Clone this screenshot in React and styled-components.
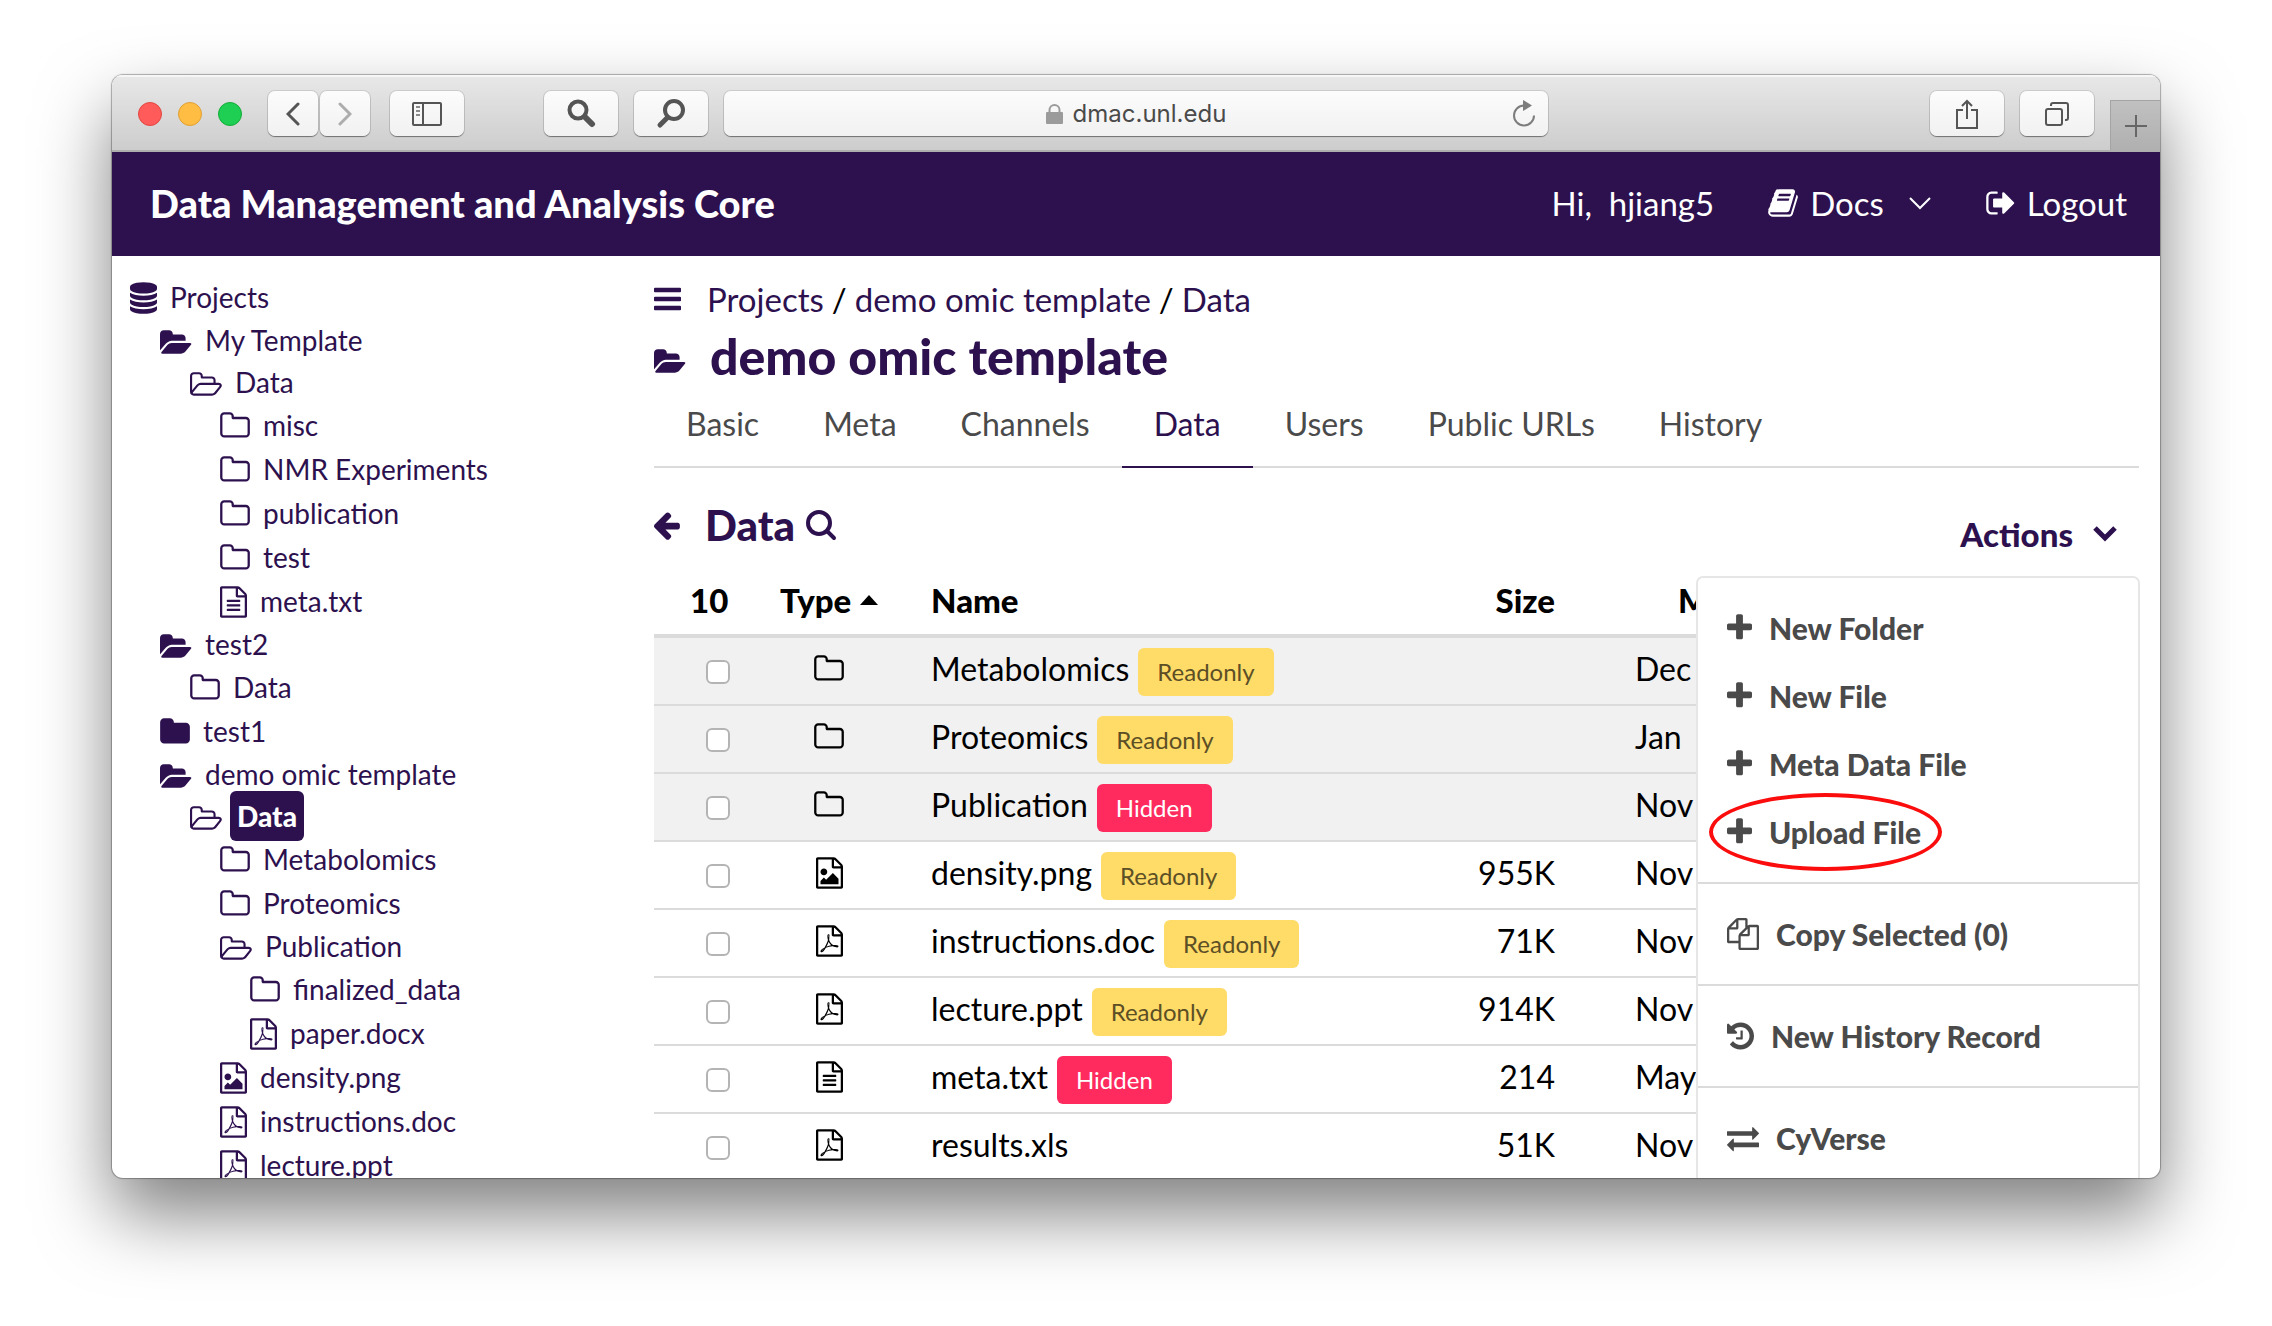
import React from "react";
import styled, { createGlobalStyle, css } from "styled-components";

const purple = "#2d114f";
const line = "#dbdbdb";
const ink = "#4a4a4a";

const GlobalStyle = createGlobalStyle`
  *, *::before, *::after { box-sizing: border-box; }
  body {
    margin: 0;
    background: #fff;
    font-family: Lato, "Liberation Sans", sans-serif;
    font-size: 32px;
    line-height: 44px;
    color: #000;
  }
  button { font: inherit; color: inherit; border: 0; background: none; padding: 0; cursor: pointer; }
  a { color: inherit; text-decoration: none; }
  ul, ol { list-style: none; margin: 0; padding: 0; }
  h1, h2 { margin: 0; }
  svg { display: block; flex: none; }
`;

/* Glyphs on a 1792-unit em square; w is the advance width, x the left edge. */
const page =
  "M1468 380q28 28 48 76t20 88v1152q0 40-28 68t-68 28h-1344q-40 0-68-28t-28-68v-1600q0-40 28-68t68-28h896q40 0 88 20t76 48zm-444-244v376h376q-10-29-22-41l-313-313q-12-12-41-22zm384 1528v-1024h-416q-40 0-68-28t-28-68v-416h-768v1536h1280z";
const disc = "v170q0 69-103 128t-280 93.5-385 34.5-385-34.5-280-93.5-103-128v-170q119 84 325 127t443 43z";
const glyphs = {
  database: {
    w: 1536,
    d: `M768 768q237 0 443-43t325-127${disc}M768 1536q237 0 443-43t325-127${disc}M768 1152q237 0 443-43t325-127${disc}M768 0q208 0 385 34.5t280 93.5 103 128v128q0 69-103 128t-280 93.5-385 34.5-385-34.5-280-93.5-103-128v-128q0-69 103-128t280-93.5 385-34.5z`,
  },
  folder: {
    w: 1664,
    d: "M1664 608v704q0 92-66 158t-158 66h-1216q-92 0-158-66t-66-158v-960q0-92 66-158t158-66h320q92 0 158 66t66 158v32h672q92 0 158 66t66 158z",
  },
  folderO: {
    w: 1664,
    d: "M1536 1312v-704q0-40-28-68t-68-28h-704q-40 0-68-28t-28-68v-64q0-40-28-68t-68-28h-320q-40 0-68 28t-28 68v960q0 40 28 68t68 28h1216q40 0 68-28t28-68zm128-704v704q0 92-66 158t-158 66h-1216q-92 0-158-66t-66-158v-960q0-92 66-158t158-66h320q92 0 158 66t66 158v32h672q92 0 158 66t66 158z",
  },
  folderOpen: {
    w: 1920,
    d: "M1879 952q0 31-31 66l-336 396q-43 51-120.5 86.5t-143.5 35.5h-1088q-34 0-60.5-13t-26.500-43q0-31 31-66l336-396q43-51 120.500-86.500t143.500-35.500h1088q34 0 60.500 13t26.500 43zm-343-344v160h-832q-94 0-197 47.500t-164 119.500l-337 396-5 6q0-4-.5-12.500t-.5-12.500v-960q0-92 66-158t158-66h320q92 0 158 66t66 158v32h544q92 0 158 66t66 158z",
  },
  folderOpenO: {
    x: 64,
    w: 1920,
    d: "M1845 931q0-35-53-35h-1088q-40 0-85.500 21.500t-71.500 52.500l-294 363q-18 24-18 40 0 35 53 35h1088q40 0 86-22t71-53l294-363q18-22 18-39zm-1141-163h768v-160q0-40-28-68t-68-28h-576q-40 0-68-28t-28-68v-64q0-40-28-68t-68-28h-320q-40 0-68 28t-28 68v853l256-315q44-53 116-87.500t140-34.500zm1269 163q0 62-46 120l-295 363q-43 53-116 87.500t-140 34.500h-1088q-92 0-158-66t-66-158v-960q0-92 66-158t158-66h320q92 0 158 66t66 158v32h544q92 0 158 66t66 158v160h192q54 0 99 24.500t67 70.500q15 32 15 68z",
  },
  text: {
    w: 1536,
    d: page + "M384 800q0-14 9-23t23-9h704q14 0 23 9t9 23v64q0 14-9 23t-23 9h-704q-14 0-23-9t-9-23zM384 1056q0-14 9-23t23-9h704q14 0 23 9t9 23v64q0 14-9 23t-23 9h-704q-14 0-23-9t-9-23zM384 1312q0-14 9-23t23-9h704q14 0 23 9t9 23v64q0 14-9 23t-23 9h-704q-14 0-23-9t-9-23z",
  },
  image: {
    w: 1536,
    d: page + "M1280 1216v320h-1024v-192l192-192 128 128 384-384zM448 1024q-80 0-136-56t-56-136 56-136 136-56 136 56 56 136-56 136-136 56z",
  },
  pdf: {
    w: 1536,
    d: page + "M894 1071q33 26 84 56 59-7 117-7 147 0 177 49 16 22 2 52 0 1-1 2l-2 2v1q-6 38-71 38-48 0-115-20t-130-53q-221 24-392 83-153 262-242 262-15 0-28-7l-24-12q-1-1-6-5-10-10-6-36 9-40 56-91.500t132-96.500q14-9 23 6 2 2 2 4 52-85 107-197 68-136 104-262-24-82-30.500-159.500t6.500-127.500q11-40 42-40h22q23 0 35 15 18 21 9 68-2 6-4 8 1 3 1 8v30q-2 123-14 192 55 164 146 238zm-576 411q52-24 137-158-51 40-87.500 84t-49.500 74zm398-920q-15 42-2 132 1-7 7-44 0-3 7-43 1-4 4-8-1-1-1-2t-1-3q-1-22-13-36 0 1-1 2zm-124 661q135-54 284-81-2-1-13-9.500t-16-13.500q-76-67-127-176-27 86-83 197-30 56-45 83zm646-16q-24-24-140-24 76 28 124 28 14 0 18-1 0-1-2-3z",
  },
  bars: {
    w: 1536,
    d: "M1536 1344v128q0 26-19 45t-45 19h-1408q-26 0-45-19t-19-45v-128q0-26 19-45t45-19h1408q26 0 45 19t19 45zM1536 832v128q0 26-19 45t-45 19h-1408q-26 0-45-19t-19-45v-128q0-26 19-45t45-19h1408q26 0 45 19t19 45zM1536 320v128q0 26-19 45t-45 19h-1408q-26 0-45-19t-19-45v-128q0-26 19-45t45-19h1408q26 0 45 19t19 45z",
  },
  plus: {
    w: 1408,
    d: "M1408 736v192q0 40-28 68t-68 28h-416v416q0 40-28 68t-68 28h-192q-40 0-68-28t-28-68v-416h-416q-40 0-68-28t-28-68v-192q0-40 28-68t68-28h416v-416q0-40 28-68t68-28h192q40 0 68 28t28 68v416h416q40 0 68 28t28 68z",
  },
  history: {
    w: 1536,
    d: "M1536 896q0 156-61 298t-164 245-245 164-298 61q-172 0-327-72.500t-264-204.500q-7-10-6.500-22.500t8.500-20.500l137-138q10-9 25-9 16 2 23 12 73 95 179 147t225 52q104 0 198.500-40.500t163.500-109.500 109.500-163.500 40.500-198.500-40.500-198.500-109.500-163.500-163.500-109.500-198.500-40.500q-98 0-188 35.500t-160 101.500l137 138q31 30 14 69-17 40-59 40h-448q-26 0-45-19t-19-45v-448q0-42 40-59 39-17 69 14l130 129q107-101 244.500-156.500t284.500-55.500q156 0 298 61t245 164 164 245 61 298zm-640-288v448q0 14-9 23t-23 9h-320q-14 0-23-9t-9-23v-64q0-14 9-23t23-9h224v-352q0-14 9-23t23-9h64q14 0 23 9t9 23z",
  },
  exchange: {
    w: 1792,
    d: "M1792 1184v192q0 13-9.500 22.500t-22.500 9.500h-1376v192q0 13-9.500 22.500t-22.500 9.500q-12 0-24-10l-319-320q-9-9-9-22 0-14 9-23l320-320q9-9 23-9 13 0 22.500 9.500t9.500 22.500v192h1376q13 0 22.500 9.500t9.500 22.500zm0-544q0 14-9 23l-320 320q-9 9-23 9-13 0-22.500-9.500t-9.500-22.500v-192h-1376q-13 0-22.500-9.500t-9.500-22.500v-192q0-13 9.500-22.500t22.500-9.500h1376v-192q0-14 9-23t23-9q12 0 24 10l319 319q9 9 9 23z",
  },
  copy: {
    w: 1792,
    d: "M1696 384q40 0 68 28t28 68v1216q0 40-28 68t-68 28h-960q-40 0-68-28t-28-68v-288h-544q-40 0-68-28t-28-68v-672q0-40 20-88t48-76l408-408q28-28 76-48t88-20h416q40 0 68 28t28 68v328q68-40 128-40h416zm-544 213l-299 299h299v-299zm-640-384l-299 299h299v-299zm196 647l316-316v-416h-384v416q0 40-28 68t-68 28h-416v640h512v-256q0-40 20-88t48-76zm956 804v-1152h-384v416q0 40-28 68t-68 28h-416v640h896z",
  },
  signOut: {
    w: 1600,
    d: "M640 1440q0 4 1 20t.5 26.500-3 23.500-10 19.500-20.500 6.500h-320q-119 0-203.500-84.500t-84.500-203.500v-704q0-119 84.500-203.500t203.500-84.500h320q13 0 22.500 9.500t9.500 22.500q0 4 1 20t.5 26.500-3 23.500-10 19.500-20.500 6.500h-320q-66 0-113 47t-47 113v704q0 66 47 113t113 47h312l11.500 1 11.500 3 8 5.500 7 9 2 13.500zm928-544q0 26-19 45l-544 544q-19 19-45 19t-45-19-19-45v-288h-448q-26 0-45-19t-19-45v-384q0-26 19-45t45-19h448v-288q0-26 19-45t45-19 45 19l544 544q19 19 19 45z",
  },
  book: {
    w: 1664,
    d: "M1639 478q40 57 18 129l-275 906q-19 64-76.500 107.500t-122.500 43.500h-923q-77 0-148.500-53.500t-99.500-131.500q-24-67-2-127 0-4 3-27t4-37q1-8-3-21.500t-3-19.500q2-11 8-21t16.500-23.500 16.500-23.500q23-38 45-91.500t30-91.500q3-10 .5-30t-.5-28q3-11 17-28t17-23q21-36 42-92t25-90q1-9-2.500-32t.5-28q4-13 22-30.500t22-22.500q19-26 42.500-84.500t27.500-96.500q1-8-3-25.500t-2-26.500q2-8 9-18t18-23 17-21q8-12 16.500-30.500t15-35 16-36 19.500-32 26.500-23.500 36-11.500 47.500 5.500l-1 3q38-9 51-9h761q74 0 114 56t18 130l-274 906q-36 119-71.500 153.500t-128.500 34.500h-869q-27 0-38 15-11 16-1 43 24 70 144 70h923q29 0 56-15.500t35-41.500l300-987q7-22 5-57 38 15 59 43zm-1064 2q-4 13 2 22.500t20 9.500h608q13 0 25.500-9.500t16.500-22.500l21-64q4-13-2-22.500t-20-9.500h-608q-13 0-25.500 9.500t-16.500 22.500zm-83 256q-4 13 2 22.500t20 9.500h608q13 0 25.500-9.500t16.500-22.500l21-64q4-13-2-22.500t-20-9.500h-608q-13 0-25.500 9.500t-16.500 22.500z",
  },
  arrowLeft: {
    w: 1536,
    d: "M1472 896v128q0 53-32.500 90.500t-84.500 37.500h-704l293 294q38 36 38 90t-38 90l-75 76q-37 37-90 37-52 0-91-37l-651-652q-37-37-37-90 0-52 37-91l651-650q38-38 91-38 52 0 90 38l75 74q38 38 38 91t-38 91l-293 293h704q52 0 84.500 37.500t32.500 90.500z",
  },
};

function Icon({ name, size = 32 }) {
  const { x = 0, w, d } = glyphs[name];
  return (
    <svg width={Math.round((w * size) / 1792)} height={size} viewBox={`${x} 0 ${w} 1792`} fill="currentColor" aria-hidden="true">
      <path d={d} />
    </svg>
  );
}

const Desktop = styled.div`
  height: 100vh;
  padding: 75px 112px 148px;
  overflow: hidden;
`;

const Window = styled.div`
  display: flex;
  flex-direction: column;
  height: 100%;
  border-radius: 11px;
  overflow: hidden;
  background: #fff;
  box-shadow: 0 0 1px 1px rgba(0, 0, 0, 0.3), 0 36px 72px rgba(0, 0, 0, 0.5);
`;

const Toolbar = styled.div`
  display: flex;
  align-items: center;
  flex: none;
  height: 77px;
  padding: 2px 0 0 26px;
  background: linear-gradient(#e8e8e8, #cdcdcd);
  border-bottom: 2px solid #aeaeae;
  box-shadow: inset 0 2px 0 #f6f6f6;
`;

const Lights = styled.div`
  display: flex;
  gap: 16px;
  margin-right: 26px;
`;

const Light = styled.button`
  width: 24px;
  height: 24px;
  border-radius: 50%;
  background: ${(p) => p.$fill};
  border: 1px solid ${(p) => p.$edge};
`;

const toolSurface = css`
  height: 45px;
  border-radius: 7px;
  background: linear-gradient(#fcfcfc, #f1f1f1);
  box-shadow: 0 0 0 1px rgba(0, 0, 0, 0.1), 0 1px 1px rgba(0, 0, 0, 0.4);
`;

const ToolGroup = styled.div`
  display: flex;
  gap: ${(p) => p.$gap}px;
  margin-right: ${(p) => p.$after}px;
`;

const ToolButton = styled.button`
  ${toolSurface}
  display: grid;
  place-items: center;
  width: ${(p) => (p.$narrow ? 50 : 74)}px;
  color: ${(p) => (p.disabled ? "#adadad" : "#555")};
`;

const AddressBar = styled.div`
  ${toolSurface}
  flex: 1;
  display: flex;
  align-items: center;
  margin-right: 382px;
  padding: 0 12px 0 36px;
  color: #4a4a4a;
  font-family: Inter, "Liberation Sans", sans-serif;
  font-size: 24px;
`;

const Address = styled.div`
  flex: 1;
  display: flex;
  align-items: center;
  justify-content: center;
  gap: 10px;
`;

const NewTab = styled.button`
  align-self: flex-end;
  display: grid;
  place-items: center;
  width: 50px;
  height: 50px;
  background: linear-gradient(#c0c0c0, #b0b0b0);
  border-left: 1px solid #a4a4a4;
  border-top: 1px solid #a4a4a4;
  color: #666;
`;

const SiteHeader = styled.header`
  display: flex;
  align-items: center;
  justify-content: space-between;
  flex: none;
  height: 104px;
  padding: 0 33px 2px 38px;
  background: ${purple};
  color: #fff;
`;

const Brand = styled.a`
  font-size: 38px;
  font-weight: 900;
`;

const HeaderNav = styled.nav`
  display: flex;
  align-items: center;
  gap: 54px;
  font-size: 33px;
`;

const HeaderItem = styled.a`
  display: flex;
  align-items: center;
  gap: 12px;
`;

const Caret = styled.svg`
  margin-left: 12px;
`;

const Columns = styled.div`
  display: flex;
  flex: 1;
  min-height: 0;
`;

const Sidebar = styled.aside`
  flex: none;
  width: 542px;
  padding: 19px 0 0 18px;
  overflow: hidden;
  color: ${purple};
  font-size: 28px;
`;

const TreeRow = styled.li`
  display: flex;
  align-items: flex-start;
  padding-left: ${(p) => p.$level * 30}px;
  line-height: ${(p) => (p.$open ? 42 : 44)}px;
  svg { margin: ${(p) => (p.$open ? 9 : 7)}px 0 0; }
`;

const TreeLink = styled.a`
  margin-left: 13px;
  ${(p) =>
    p.$selected &&
    css`
      margin: -4px 0 -4px 8px;
      padding: 0 7px;
      border-radius: 6px;
      line-height: 50px;
      background: ${purple};
      color: #fff;
      font-weight: 900;
    `}
`;

const Main = styled.main`
  flex: 1;
  min-width: 0;
  padding: 21px 21px 0 0;
`;

const Crumbs = styled.nav`
  display: flex;
  align-items: center;
  color: ${purple};
  font-size: 33px;
  ol { display: flex; margin-left: 26px; }
  li + li::before { content: "/"; margin: 0 8px; color: #000; }
`;

const Title = styled.h1`
  display: flex;
  align-items: center;
  gap: 24px;
  margin-top: 5px;
  font-size: 50px;
  font-weight: 900;
  line-height: 60px;
  color: ${purple};
  svg { margin-top: 12px; }
`;

const Tabs = styled.nav`
  display: flex;
  margin-top: 16px;
  border-bottom: 2px solid ${line};
`;

const Tab = styled.a`
  margin-bottom: -2px;
  padding: 0 32px 20px;
  border-bottom: 2px solid ${(p) => (p.$active ? purple : "transparent")};
  color: ${(p) => (p.$active ? purple : ink)};
`;

const ListHead = styled.div`
  display: flex;
  align-items: center;
  justify-content: space-between;
  height: 68px;
  margin-top: 30px;
  color: ${purple};
`;

const FolderTitle = styled.div`
  display: flex;
  align-items: center;
  align-self: flex-start;
  h2 { margin: 0 10px 0 24px; font-size: 42px; font-weight: 900; line-height: 54px; }
`;

const Dropdown = styled.div`
  position: relative;
  padding: 4px 22px 0 0;
`;

const ActionsButton = styled.button`
  display: flex;
  align-items: center;
  gap: 20px;
  font-weight: 900;
  font-size: 33px;
`;

const Menu = styled.ul`
  position: absolute;
  z-index: 2;
  top: 68px;
  right: -1px;
  width: 444px;
  padding: 16px 0;
  border: 2px solid #e6e6e6;
  border-radius: 7px;
  background: #fff;
  color: ${ink};
  font-size: 30px;
  font-weight: 900;
`;

const MenuItem = styled.li`
  position: relative;
  ${(p) =>
    p.$divided &&
    css`
      margin-top: 16px;
      padding-top: 16px;
      border-top: 2px solid ${line};
    `}
  button {
    display: flex;
    align-items: center;
    gap: 17px;
    width: 100%;
    height: 68px;
    padding-left: 29px;
  }
`;

const Ring = styled.span`
  position: absolute;
  top: -5px;
  left: 11px;
  width: 233px;
  height: 78px;
  border: 4px solid #fb0d0d;
  border-radius: 50%;
  pointer-events: none;
`;

const Table = styled.table`
  width: 100%;
  table-layout: fixed;
  border-collapse: separate;
  border-spacing: 0;
`;

const Th = styled.th`
  width: ${(p) => (p.$w ? p.$w + "px" : "auto")};
  height: 72px;
  padding: 0 25px 0 ${(p) => p.$left || 25}px;
  border-bottom: 4px solid ${line};
  text-align: ${(p) => p.$align || "left"};
  font-weight: 900;
  font-size: 33px;
  white-space: nowrap;
`;

const Td = styled.td`
  height: 68px;
  padding: 0 25px 4px ${(p) => p.$left || 25}px;
  border-bottom: 2px solid ${line};
  text-align: ${(p) => p.$align || "left"};
  white-space: nowrap;
`;

const Row = styled.tr`
  background: ${(p) => (p.$folder ? "#f1f1f1" : "#fff")};
`;

const Check = styled.input`
  appearance: none;
  display: block;
  width: 24px;
  height: 24px;
  margin: 6px 0 0;
  border: 2px solid #b4b4b4;
  border-radius: 6px;
  background: #fff;
`;

const SortButton = styled.button`
  display: flex;
  align-items: center;
  gap: 9px;
  font-weight: 900;
`;

const TypeCell = styled.div`
  display: flex;
  justify-content: center;
`;

const NameCell = styled.div`
  display: flex;
  align-items: center;
  gap: 9px;
`;

const Tag = styled.span`
  margin: 3px 0 -3px;
  padding: 0 19px;
  border-radius: 6px;
  font-size: 24px;
  line-height: 48px;
  background: ${(p) => (p.$kind === "Hidden" ? "#ff2b5e" : "#ffdb68")};
  color: ${(p) => (p.$kind === "Hidden" ? "#fff" : "#5c4f26")};
`;

const tree = [
  [0, "database", "Projects"],
  [1, "folderOpen", "My Template"],
  [2, "folderOpenO", "Data"],
  [3, "folderO", "misc"],
  [3, "folderO", "NMR Experiments"],
  [3, "folderO", "publication"],
  [3, "folderO", "test"],
  [3, "text", "meta.txt"],
  [1, "folderOpen", "test2"],
  [2, "folderO", "Data"],
  [1, "folder", "test1"],
  [1, "folderOpen", "demo omic template"],
  [2, "folderOpenO", "Data", true],
  [3, "folderO", "Metabolomics"],
  [3, "folderO", "Proteomics"],
  [3, "folderOpenO", "Publication"],
  [4, "folderO", "finalized_data"],
  [4, "pdf", "paper.docx"],
  [3, "image", "density.png"],
  [3, "pdf", "instructions.doc"],
  [3, "pdf", "lecture.ppt"],
];

const files = [
  ["folderO", "Metabolomics", "Readonly", "", "Dec"],
  ["folderO", "Proteomics", "Readonly", "", "Jan"],
  ["folderO", "Publication", "Hidden", "", "Nov"],
  ["image", "density.png", "Readonly", "955K", "Nov"],
  ["pdf", "instructions.doc", "Readonly", "71K", "Nov"],
  ["pdf", "lecture.ppt", "Readonly", "914K", "Nov"],
  ["text", "meta.txt", "Hidden", "214", "May"],
  ["pdf", "results.xls", "", "51K", "Nov"],
];

const actions = [
  { icon: "plus", label: "New Folder" },
  { icon: "plus", label: "New File" },
  { icon: "plus", label: "Meta Data File" },
  { icon: "plus", label: "Upload File", ringed: true },
  { icon: "copy", label: "Copy Selected (0)", divided: true },
  { icon: "history", label: "New History Record", divided: true },
  { icon: "exchange", label: "CyVerse", divided: true },
];

const tabs = ["Basic", "Meta", "Channels", "Data", "Users", "Public URLs", "History"];

function BrowserToolbar() {
  return (
    <Toolbar>
      <Lights>
        <Light $fill="#ff5b5a" $edge="#e2463f" aria-label="Close" />
        <Light $fill="#ffbd44" $edge="#e0a033" aria-label="Minimize" />
        <Light $fill="#1ecf53" $edge="#14ab38" aria-label="Zoom" />
      </Lights>
      <ToolGroup $gap={2} $after={20}>
        <ToolButton $narrow aria-label="Back">
          <svg width="14" height="24" viewBox="0 0 14 24" fill="none" stroke="currentColor" strokeWidth="3" strokeLinecap="round"><path d="M12 2 2 12l10 10" /></svg>
        </ToolButton>
        <ToolButton $narrow disabled aria-label="Forward">
          <svg width="14" height="24" viewBox="0 0 14 24" fill="none" stroke="currentColor" strokeWidth="3" strokeLinecap="round"><path d="m2 2 10 10L2 22" /></svg>
        </ToolButton>
      </ToolGroup>
      <ToolGroup $gap={0} $after={80}>
        <ToolButton aria-label="Sidebar">
          <svg width="30" height="24" viewBox="0 0 30 24" fill="none" stroke="currentColor" strokeWidth="2"><rect x="1" y="1" width="28" height="22" rx="1" /><path d="M11 1v22" /><path d="M4 5h4M4 9h4M4 13h4" stroke="#8a8a8a" /></svg>
        </ToolButton>
      </ToolGroup>
      <ToolGroup $gap={16} $after={16}>
        <ToolButton aria-label="Find">
          <svg width="30" height="30" viewBox="0 0 30 30" fill="none" stroke="currentColor" strokeLinecap="round"><circle cx="12" cy="11" r="8.500" strokeWidth="4" /><path d="m19 18 7 7" strokeWidth="6" /></svg>
        </ToolButton>
        <ToolButton aria-label="Look up">
          <svg width="30" height="30" viewBox="0 0 30 30" fill="none" stroke="currentColor" strokeLinecap="round"><circle cx="18" cy="11" r="9" strokeWidth="4" /><path d="m11 19-7 7" strokeWidth="5" /></svg>
        </ToolButton>
      </ToolGroup>
      <AddressBar>
        <Address>
          <svg width="17" height="20" viewBox="0 0 17 20" fill="#9b9b9b"><rect y="8" width="17" height="12" rx="1" /><path d="M3.500 9V6a5 5 0 0 1 10 0v3" fill="none" stroke="#9b9b9b" strokeWidth="2" /></svg>
          dmac.unl.edu
        </Address>
        <svg width="24" height="28" viewBox="0 0 24 28" fill="none" stroke="#7d7d7d" strokeWidth="2"><path d="M12 5.500a10 10 0 1 0 10 10" /><path d="m11 0 9 5.500-9 5.500z" fill="#7d7d7d" stroke="none" /></svg>
      </AddressBar>
      <ToolGroup $gap={16} $after={16}>
        <ToolButton aria-label="Share">
          <svg width="24" height="30" viewBox="0 0 24 30" fill="none" stroke="currentColor" strokeWidth="2"><path d="M8 11H2v18h20V11h-6M12 20V2M7 7l5-5 5 5" /></svg>
        </ToolButton>
        <ToolButton aria-label="Tabs">
          <svg width="26" height="26" viewBox="0 0 26 26" fill="none" stroke="currentColor" strokeWidth="2"><rect x="2" y="8" width="16" height="16" rx="2" /><path d="M7 5V4q0-2 2-2h13q2 0 2 2v13q0 2-2 2h-1" /></svg>
        </ToolButton>
      </ToolGroup>
      <NewTab aria-label="New tab">
        <svg width="24" height="24" viewBox="0 0 24 24" stroke="currentColor" strokeWidth="2"><path d="M12 1v22M1 12h22" /></svg>
      </NewTab>
    </Toolbar>
  );
}

export default function App() {
  return (
    <Desktop>
      <GlobalStyle />
      <Window>
        <BrowserToolbar />
        <SiteHeader>
          <Brand href="#">Data Management and Analysis Core</Brand>
          <HeaderNav>
            <span>Hi,&nbsp; hjiang5</span>
            <HeaderItem href="#docs">
              <Icon name="book" />
              Docs
              <Caret width="24" height="14" viewBox="0 0 24 14" fill="none" stroke="#fff" strokeWidth="2"><path d="m2 2 10 10L22 2" /></Caret>
            </HeaderItem>
            <HeaderItem href="#logout">
              <Icon name="signOut" />
              Logout
            </HeaderItem>
          </HeaderNav>
        </SiteHeader>
        <Columns>
          <Sidebar>
            <ul>
              {tree.map(([level, icon, label, selected], i) => {
                const open = icon.startsWith("folderOpen");
                return (
                  <TreeRow key={i} $level={level} $open={open}>
                    <Icon name={icon} size={open ? 30 : 32} />
                    <TreeLink href="#tree" $selected={selected}>{label}</TreeLink>
                  </TreeRow>
                );
              })}
            </ul>
          </Sidebar>
          <Main>
            <Crumbs aria-label="Breadcrumb">
              <Icon name="bars" />
              <ol>
                <li><a href="#projects">Projects</a></li>
                <li><a href="#template">demo omic template</a></li>
                <li><a href="#data">Data</a></li>
              </ol>
            </Crumbs>
            <Title>
              <Icon name="folderOpen" size={30} />
              demo omic template
            </Title>
            <Tabs>
              {tabs.map((t) => (
                <Tab key={t} href="#tab" $active={t === "Data"}>{t}</Tab>
              ))}
            </Tabs>
            <ListHead>
              <FolderTitle>
                <button aria-label="Up one level"><Icon name="arrowLeft" /></button>
                <h2>Data</h2>
                <button aria-label="Search">
                  <svg width="32" height="32" viewBox="0 0 32 32" fill="none" stroke="currentColor" strokeWidth="4" strokeLinecap="round"><circle cx="14" cy="14" r="11" /><path d="m22 22 7 7" /></svg>
                </button>
              </FolderTitle>
              <Dropdown>
                <ActionsButton aria-haspopup="menu" aria-expanded="true">
                  Actions
                  <svg width="24" height="16" viewBox="0 0 24 16" fill="none" stroke="currentColor" strokeWidth="5"><path d="m2 2 10 10L22 2" /></svg>
                </ActionsButton>
                <Menu>
                  {actions.map((a) => (
                    <MenuItem key={a.label} $divided={a.divided}>
                      <button>
                        <Icon name={a.icon} />
                        {a.label}
                      </button>
                      {a.ringed && <Ring />}
                    </MenuItem>
                  ))}
                </Menu>
              </Dropdown>
            </ListHead>
            <Table>
              <thead>
                <tr>
                  <Th $w={98} $left={36}>10</Th>
                  <Th $w={154} $left={28}>
                    <SortButton>
                      Type
                      <svg width="18" height="10" viewBox="0 0 18 10" fill="currentColor"><path d="M9 0l9 10H0z" /></svg>
                    </SortButton>
                  </Th>
                  <Th>Name</Th>
                  <Th $w={150} $align="right">Size</Th>
                  <Th $w={559} $left={98}>Modified</Th>
                </tr>
              </thead>
              <tbody>
                {files.map(([icon, name, tag, size, date]) => (
                  <Row key={name} $folder={icon === "folderO"}>
                    <Td $left={52}><Check type="checkbox" aria-label={`Select ${name}`} /></Td>
                    <Td><TypeCell><Icon name={icon} /></TypeCell></Td>
                    <Td>
                      <NameCell>
                        <a href="#file">{name}</a>
                        {tag && <Tag $kind={tag}>{tag}</Tag>}
                      </NameCell>
                    </Td>
                    <Td $align="right">{size}</Td>
                    <Td $left={55}>{date}</Td>
                  </Row>
                ))}
              </tbody>
            </Table>
          </Main>
        </Columns>
      </Window>
    </Desktop>
  );
}
